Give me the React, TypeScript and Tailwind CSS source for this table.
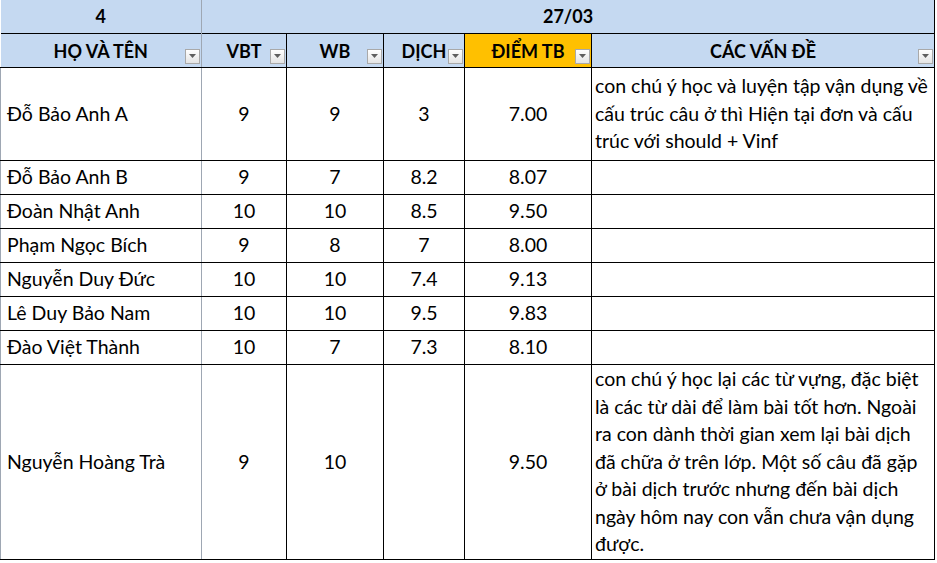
import React from 'react';

const rows = [
  { name: 'Đỗ Bảo Anh A', vbt: '9', wb: '9', dich: '3', tb: '7.00', h: 'h-[93px]', note: ['con chú ý học và luyện tập vận dụng về', 'cấu trúc câu ở thì Hiện tại đơn và cấu', 'trúc với should + Vinf'] },
  { name: 'Đỗ Bảo Anh B', vbt: '9', wb: '7', dich: '8.2', tb: '8.07', h: 'h-[34px]', note: [] },
  { name: 'Đoàn Nhật Anh', vbt: '10', wb: '10', dich: '8.5', tb: '9.50', h: 'h-[34px]', note: [] },
  { name: 'Phạm Ngọc Bích', vbt: '9', wb: '8', dich: '7', tb: '8.00', h: 'h-[34px]', note: [] },
  { name: 'Nguyễn Duy Đức', vbt: '10', wb: '10', dich: '7.4', tb: '9.13', h: 'h-[34px]', note: [] },
  { name: 'Lê Duy Bảo Nam', vbt: '10', wb: '10', dich: '9.5', tb: '9.83', h: 'h-[34px]', note: [] },
  { name: 'Đào Việt Thành', vbt: '10', wb: '7', dich: '7.3', tb: '8.10', h: 'h-[34px]', note: [] },
  {
    name: 'Nguyễn Hoàng Trà', vbt: '9', wb: '10', dich: '', tb: '9.50', h: 'h-[195px]', note: [
      'con chú ý học lại các từ vựng, đặc biệt',
      'là các từ dài để làm bài tốt hơn. Ngoài',
      'ra con dành thời gian xem lại bài dịch',
      'đã chữa ở trên lớp. Một số câu đã gặp',
      'ở bài dịch trước nhưng đến bài dịch',
      'ngày hôm nay con vẫn chưa vận dụng',
      'được.',
    ],
  },
];

function FilterButton() {
  return (
    <span className="absolute right-[1px] bottom-[3px] w-[15px] h-[15px] border border-[#a9a9a9] bg-gradient-to-b from-white to-[#e4e4e4] flex items-center justify-center">
      <svg width="7" height="4" viewBox="0 0 7 4">
        <path d="M0 0 H7 L3.5 4 Z" fill="#5f5f5f" />
      </svg>
    </span>
  );
}

function HeadCell({ label, orange, first }: { label: string; orange?: boolean; first?: boolean }) {
  return (
    <th
      className={`relative p-0 border-y border-black font-bold text-[18px] text-center ${
        orange ? 'bg-[#ffc000]' : 'bg-[#c5d9f1]'
      } ${first ? 'border-r border-r-[#9ea7b3]' : 'border-x border-black'}`}
    >
      <span className="relative top-[1px]">{label}</span>
      <FilterButton />
    </th>
  );
}

export default function App() {
  return (
    <div className="w-[937px] h-[563px] bg-white overflow-hidden text-black" style={{ fontFamily: 'Lato, "Open Sans", sans-serif' }}>
      <table className="table-fixed border-collapse w-[934px]">
        <colgroup>
          <col className="w-[201px]" />
          <col className="w-[85px]" />
          <col className="w-[97px]" />
          <col className="w-[81px]" />
          <col className="w-[127px]" />
          <col className="w-[343px]" />
        </colgroup>
        <tbody>
          <tr className="h-[33px] bg-[#c5d9f1]">
            <td className="p-0 text-center font-bold text-[18px] border-r border-r-[#9ea7b3]">4</td>
            <td colSpan={5} className="p-0 text-center font-bold text-[18px] border-r border-black">27/03</td>
          </tr>
          <tr className="h-[34px]">
            <HeadCell label="HỌ VÀ TÊN" first />
            <HeadCell label="VBT" />
            <HeadCell label="WB" />
            <HeadCell label="DỊCH" />
            <HeadCell label="ĐIỂM TB" orange />
            <HeadCell label="CÁC VẤN ĐỀ" />
          </tr>
          {rows.map((r) => (
            <tr key={r.name} className={`${r.h} text-[19.5px]`}>
              <td className="p-0 pl-[6px] border-y border-black border-r border-r-[#9ea7b3] border-l border-l-[#9ea7b3] whitespace-nowrap">{r.name}</td>
              <td className="p-0 text-center border border-black">{r.vbt}</td>
              <td className="p-0 text-center border border-black">{r.wb}</td>
              <td className="p-0 text-center border border-black">{r.dich}</td>
              <td className="p-0 text-center border border-black">{r.tb}</td>
              <td className="p-0 pl-[3px] border border-black leading-[27.5px] align-middle">
                {r.note.map((line, i) => (
                  <div key={i} className="whitespace-nowrap">{line}</div>
                ))}
              </td>
            </tr>
          ))}
        </tbody>
      </table>
    </div>
  );
}
